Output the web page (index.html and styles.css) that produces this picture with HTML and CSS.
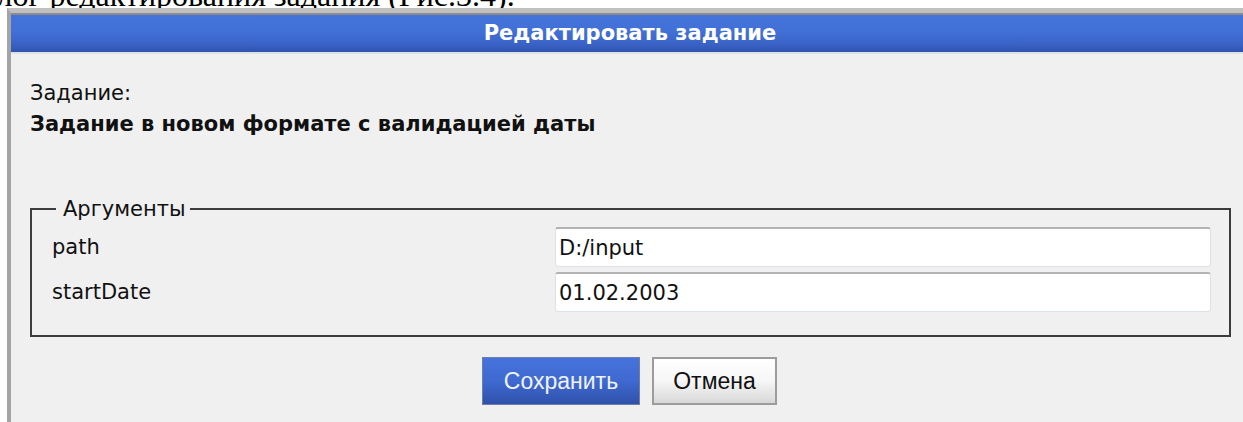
FILE: index.html
```html
<!DOCTYPE html>
<html lang="ru">
<head>
<meta charset="utf-8">
<title>Редактировать задание</title>
<link rel="stylesheet" href="styles.css">
</head>
<body>
<p class="caption"><span class="caption-text">Диалог редактирования задания (Рис.3.4).</span></p>
<div class="dialog">
  <div class="dialog-title">Редактировать задание</div>
  <div class="dialog-body">
    <div class="task">
      <div class="task-label">Задание:</div>
      <div class="task-name">Задание в новом формате с валидацией даты</div>
    </div>
    <fieldset class="args">
      <legend class="args-legend">Аргументы</legend>
      <div class="args-grid">
        <label class="arg-label" for="arg-path">path</label>
        <input class="arg-input" id="arg-path" type="text" value="D:/input">
        <label class="arg-label" for="arg-start">startDate</label>
        <input class="arg-input" id="arg-start" type="text" value="01.02.2003">
      </div>
    </fieldset>
    <div class="actions">
      <button class="btn btn-primary" type="button">Сохранить</button>
      <button class="btn btn-default" type="button">Отмена</button>
    </div>
  </div>
</div>
</body>
</html>
```

FILE: styles.css
```css
html, body {
  margin: 0;
  padding: 0;
  background: #ffffff;
}

body {
  width: 1243px;
  height: 422px;
  overflow: hidden;
}

/* document caption line above the dialog, mostly scrolled out of view */
.caption {
  margin: 0;
  height: 8px;
  overflow: hidden;
  font-family: "Liberation Serif", "Times New Roman", serif;
  font-size: 32px;
  line-height: 32px;
  color: #000;
  white-space: nowrap;
}

.caption-text {
  display: block;
  margin-top: -21px;
  margin-left: -57px;
}

.dialog {
  margin-left: 7px;
  border-left: 4px solid #a4a4a4;
  border-top: 5px solid #c0c0c0;
  height: 409px;
  display: flex;
  flex-direction: column;
  background: #f0f0f0;
  font-family: "DejaVu Sans", Tahoma, sans-serif;
  color: #111;
}

.dialog-title {
  height: 37px;
  border-top: 2px solid #8c8c8c;
  border-bottom: 2px solid #dde3e8;
  background: linear-gradient(to bottom, #4473da 0%, #4170d6 45%, #3a62c6 80%, #2f53ad 100%);
  color: #ffffff;
  font-weight: bold;
  font-size: 21px;
  line-height: 37px;
  text-align: center;
  padding-left: 6px;
}

.dialog-body {
  flex: 1;
  padding: 24px 12px 0 19px;
}

.task {
  font-size: 21px;
  line-height: 31px;
}

.task-name {
  font-weight: bold;
}

.args {
  margin: 57px 0 0 0;
  padding: 0 18px 23px 20px;
  border: 2px solid #3c3c3c;
  min-width: 0;
}

.args-legend {
  margin-left: 4px;
  padding: 0 5px 0 7px;
  font-size: 21px;
  line-height: 24px;
}

.args-grid {
  display: grid;
  grid-template-columns: 503px 1fr;
  row-gap: 5px;
  align-items: center;
  margin-top: 6px;
}

.arg-label {
  font-size: 21px;
}

.arg-input {
  box-sizing: border-box;
  height: 40px;
  width: 100%;
  margin: 0;
  padding: 0 3px;
  border: 1px solid #dde2e8;
  border-top: 2px solid #b3b3b3;
  border-radius: 3px;
  background: #ffffff;
  font-family: "DejaVu Sans", Tahoma, sans-serif;
  font-size: 21px;
  color: #111;
  outline: none;
}

.actions {
  display: flex;
  justify-content: center;
  gap: 12px;
  margin-top: 20px;
  padding-right: 2px;
}

.btn {
  box-sizing: border-box;
  height: 48px;
  margin: 0;
  font-family: "Liberation Sans", Arial, sans-serif;
  font-size: 23px;
  cursor: pointer;
}

.btn-primary {
  width: 158px;
  border: 1px solid #6d7fa6;
  background: linear-gradient(to bottom, #4673dc 0%, #3f69d0 50%, #2f51ab 100%);
  color: #eef2fb;
}

.btn-default {
  width: 125px;
  border: 2px solid #9c9c9c;
  background: linear-gradient(to bottom, #ffffff 0%, #f6f6f6 50%, #d8d8d8 100%);
  color: #111;
}
```
